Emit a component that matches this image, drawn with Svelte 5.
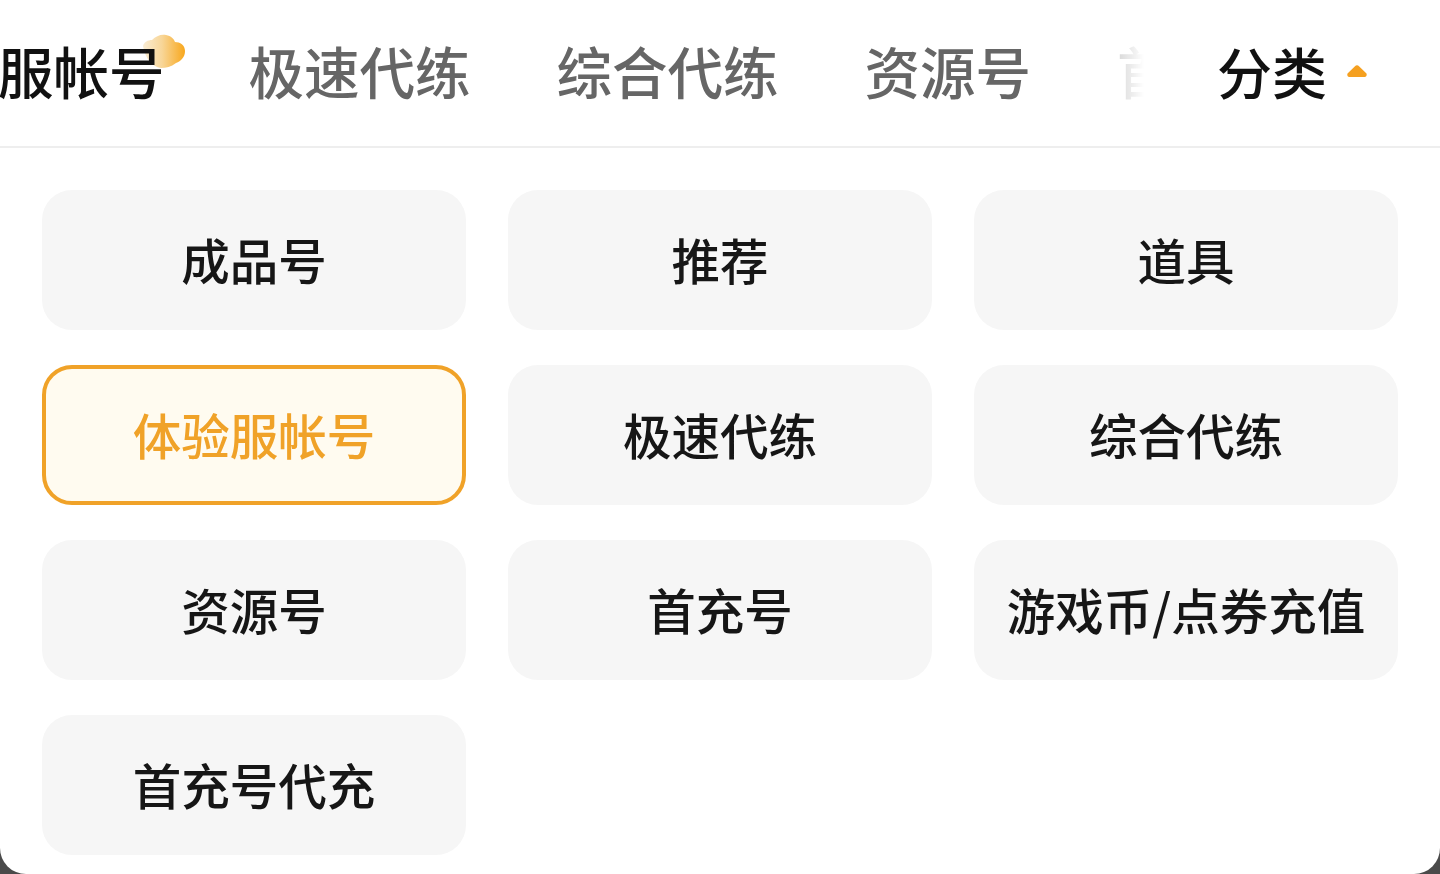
<script>
  const tabs = ['体验服帐号', '极速代练', '综合代练', '资源号', '首充号'];
  const categories = [
    '成品号',
    '推荐',
    '道具',
    '体验服帐号',
    '极速代练',
    '综合代练',
    '资源号',
    '首充号',
    '游戏币/点券充值',
    '首充号代充'
  ];
  const active = '体验服帐号';
</script>

<div class="panel">
  <header class="bar">
    <div class="strip">
      <div class="track">
        {#each tabs as tab}
          <span class="tab" class:on={tab === active}>
            {tab}
            {#if tab === active}
              <svg class="cloud" width="44" height="36" viewBox="0 0 44 36">
                <defs>
                  <linearGradient id="cloud-fill" x1="0" y1="0" x2="1" y2="0">
                    <stop offset="0" stop-color="#f9ecd4" />
                    <stop offset="0.45" stop-color="#f8d698" />
                    <stop offset="1" stop-color="#f8a71c" />
                  </linearGradient>
                </defs>
                <path
                  d="M1 12C2 8 6 6 10 6C14 2 19 0 24 1C29 2 32 5 33 8C38 8 43 11 43 17C43 23 39 27 34 29C29 33 24 34 19 34C10 33 3 24 1 12Z"
                  fill="url(#cloud-fill)"
                />
              </svg>
            {/if}
          </span>
        {/each}
      </div>
    </div>
    <div class="toggle">
      <span>分类</span>
      <svg width="22" height="14" viewBox="0 0 22 14">
        <path d="M9 2.200C10 .9 12 .9 13 2.200L20 9C21.500 10.500 20.500 13 18.500 13H3.500C1.500 13 .5 10.500 2 9Z" fill="#f5a020" />
      </svg>
    </div>
  </header>

  <div class="grid">
    {#each categories as item}
      <div class="cell" class:selected={item === active}>{item}</div>
    {/each}
  </div>
</div>

<style>
  :global(body) {
    margin: 0;
    background: #4a4a4a;
  }

  .panel {
    width: 1440px;
    height: 874px;
    overflow: hidden;
    background: #fff;
    border-radius: 0 0 26px 26px;
    font-family: "Noto Sans CJK SC", "Noto Sans", sans-serif;
  }

  .bar {
    display: flex;
    align-items: center;
    height: 146px;
    border-bottom: 2px solid #eeeeee;
  }

  .strip {
    width: 1146px;
    height: 100%;
    overflow: hidden;
    -webkit-mask-image: linear-gradient(to right, #000 1040px, transparent 1144px);
    mask-image: linear-gradient(to right, #000 1040px, transparent 1144px);
  }

  .track {
    display: flex;
    align-items: center;
    gap: 86px;
    box-sizing: border-box;
    height: 100%;
    padding-bottom: 7px;
    margin-left: -113px;
    white-space: nowrap;
  }

  .tab {
    position: relative;
    flex: none;
    font-size: 55.5px;
    font-weight: 500;
    color: #666;
  }

  .tab.on {
    margin-right: -2px;
    color: #111;
  }

  .cloud {
    position: absolute;
    z-index: -1;
    top: 4px;
    right: -21px;
  }

  .toggle {
    display: flex;
    align-items: center;
    gap: 19px;
    padding-left: 71px;
    padding-bottom: 7px;
    font-size: 55px;
    font-weight: 500;
    color: #111;
  }

  .toggle svg {
    margin-top: 3px;
  }

  .grid {
    display: grid;
    grid-template-columns: repeat(3, 424px);
    grid-auto-rows: 140px;
    gap: 35px 42px;
    padding: 42px 42px 0;
  }

  .cell {
    display: flex;
    align-items: center;
    justify-content: center;
    box-sizing: border-box;
    padding-bottom: 2px;
    background: #f6f6f6;
    border-radius: 30px;
    font-size: 48.5px;
    font-weight: 500;
    color: #161616;
    white-space: nowrap;
  }

  .cell.selected {
    background: #fffbf0;
    border: 4px solid #f0a228;
    color: #f0a228;
  }
</style>
